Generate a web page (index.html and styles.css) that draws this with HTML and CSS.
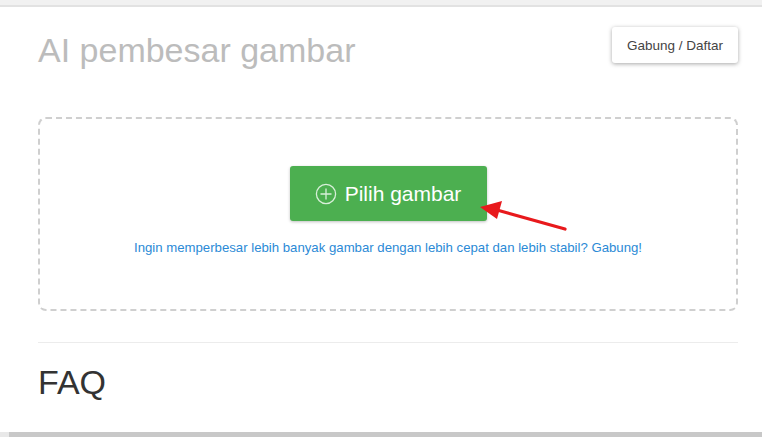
FILE: index.html
```html
<!DOCTYPE html>
<html lang="id">
<head>
    <meta charset="UTF-8">
    <meta name="viewport" content="width=device-width, initial-scale=1.0">
    <title>AI pembesar gambar</title>
    <link rel="stylesheet" href="styles.css">
</head>
<body>
    <div class="topbar"></div>

    <div class="page">
        <div class="header">
            <h1 class="title">AI pembesar gambar</h1>
            <button class="login-btn">Gabung / Daftar</button>
        </div>

        <div class="upload-box">
            <button class="pick-btn">
                <svg class="plus-icon" viewBox="0 0 22 22" width="22" height="22">
                    <circle cx="11" cy="11" r="9.6" fill="none" stroke="currentColor" stroke-width="1.3"/>
                    <path d="M11 5.5v11M5.5 11h11" stroke="currentColor" stroke-width="1.3"/>
                </svg>
                Pilih gambar
            </button>
            <a class="join-link" href="#">Ingin memperbesar lebih banyak gambar dengan lebih cepat dan lebih stabil? Gabung!</a>

            <!-- pointer drawn on top of the upload area -->
            <svg class="arrow" viewBox="0 0 100 40" width="100" height="40">
                <path d="M88 30 L20 11" stroke="#e8191c" stroke-width="3.2" stroke-linecap="round"/>
                <path d="M3 8 L25 2 L20 20 Z" fill="#e8191c"/>
            </svg>
        </div>

        <hr class="divider">

        <h2 class="faq">FAQ</h2>
    </div>

    <div class="scrollbar"><div class="thumb"></div></div>
</body>
</html>
```

FILE: styles.css
```css
body {
    margin: 0;
    font-family: "Liberation Sans", Arial, sans-serif;
    background: #fff;
    color: #333;
    overflow: hidden;
}
.topbar {
    height: 5px;
    background: #f1f1f1;
    border-bottom: 2px solid #e2e2e2;
}
.page {
    padding: 0 24px 0 38px;
}
.header {
    display: flex;
    justify-content: space-between;
    align-items: flex-start;
    padding-top: 20px;
}
.title {
    margin: 4px 0 0;
    font-size: 34px;
    font-weight: normal;
    color: #bcbcbc;
    line-height: 38px;
}
.login-btn {
    height: 36px;
    padding: 0 15px;
    background: #fff;
    border: none;
    border-radius: 3px;
    box-shadow: 0 1px 4px rgba(0, 0, 0, 0.35);
    font-family: inherit;
    font-size: 13.5px;
    color: #444;
    cursor: pointer;
}
.upload-box {
    position: relative;
    margin-top: 48px;
    height: 194px;
    border: 2px dashed #cfcfcf;
    border-radius: 8px;
    display: flex;
    flex-direction: column;
    align-items: center;
    padding-top: 47px;
    box-sizing: border-box;
}
.pick-btn {
    display: flex;
    align-items: center;
    gap: 8px;
    width: 197px;
    height: 55px;
    justify-content: center;
    background: #4caf50;
    color: #fff;
    border: none;
    border-radius: 3px;
    box-shadow: 0 1px 3px rgba(0, 0, 0, 0.25);
    font-family: inherit;
    font-size: 21px;
    cursor: pointer;
}
.plus-icon {
    color: #d8efd9;
}
.join-link {
    margin-top: 19px;
    font-size: 13.2px;
    color: #2b8ad6;
    text-decoration: none;
}
.arrow {
    position: absolute;
    left: 437px;
    top: 80px;
}
.divider {
    margin: 31px 0 0;
    border: none;
    border-top: 1px solid #ececec;
}
.faq {
    margin: 20px 0 0;
    font-size: 34px;
    font-weight: normal;
    color: #333;
}
.scrollbar {
    position: fixed;
    left: 0;
    right: 0;
    bottom: 0;
    height: 5px;
    background: #e8e8e8;
}
.thumb {
    margin-left: 9px;
    height: 100%;
    background: #c8c8c8;
}
```
